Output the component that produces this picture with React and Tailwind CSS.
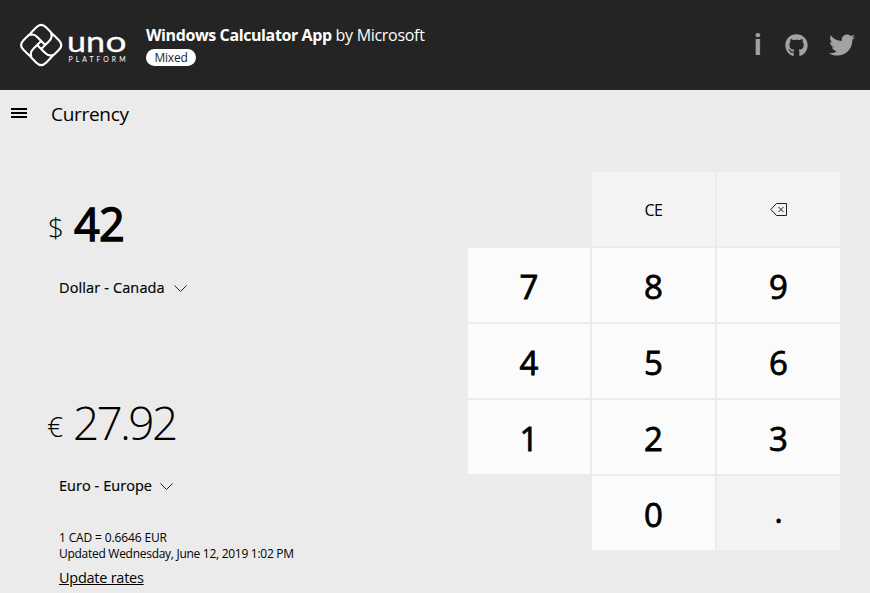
import { FaTwitter, FaGithub } from "react-icons/fa";

const keys = ["", "CE", "back", "7", "8", "9", "4", "5", "6", "1", "2", "3", "", "0", "."];

function Logo() {
  return (
    <svg className="h-[46px] w-[110px]" viewBox="0 0 110 46" fill="none">
      <g transform="translate(22.2 23) rotate(45) scale(.96)" stroke="#fff" strokeWidth="2.2" strokeLinejoin="round">
        {[0, 90, 180, 270].map((a) => (
          <path key={a} transform={`rotate(${a})`} d="M3 -3H-8.5Q-14.5 -3 -15.8 1.5M-15.8 1.5Q-16.6 -1 -16.6 -4V-9.5Q-16.6 -16.6 -9.5 -16.6H-4Q-1 -16.6 1.5 -15.8" />
        ))}
      </g>
      <g fill="#fff" stroke="#fff" fontFamily="Lato, sans-serif" fontSize="29" strokeWidth="0.3">
        <text y="30">
          <tspan x="48" textLength="19" lengthAdjust="spacingAndGlyphs">u</tspan>
          <tspan x="67" textLength="19" lengthAdjust="spacingAndGlyphs">n</tspan>
          <tspan x="86.5" textLength="21" lengthAdjust="spacingAndGlyphs">o</tspan>
        </text>
      </g>
      <text x="49.5" y="40" textLength="57" fill="#fff" fontFamily="Lato, sans-serif" fontWeight="400" fontSize="6.8">PLATFORM</text>
    </svg>
  );
}

function Chevron() {
  return (
    <svg className="h-[7px] w-[13px]" viewBox="0 0 13 7" fill="none" stroke="#222" strokeWidth="1">
      <path d="M.5 .5l6 6 6-6" />
    </svg>
  );
}

function Key({ label }) {
  if (!label) return <div />;
  const light = label === "CE" || label === "back" || label === ".";
  return (
    <button className={"flex items-center justify-center " + (light ? "bg-[#f3f3f3]" : "bg-[#fbfbfb]")}>
      {label === "back" ? (
        <svg className="mt-[2px] h-[14px] w-[18px]" viewBox="0 0 18 14" fill="none" stroke="#222">
          <path d="M6.5 .5h10v12h-10L.8 6.5zM8.5 4l5 5M13.5 4l-5 5" />
        </svg>
      ) : label === "CE" ? (
        <span className="pt-[2px] text-[16px] tracking-[-0.4px]">CE</span>
      ) : label === "." ? (
        <span className="pb-[5px] text-[33px] leading-none [-webkit-text-stroke:0.5px_black]">.</span>
      ) : (
        <span className="pt-[3px] text-[33px] leading-none [-webkit-text-stroke:0.8px_black]">{label}</span>
      )}
    </button>
  );
}

export default function App() {
  return (
    <div className="flex h-[593px] w-[870px] flex-col overflow-hidden bg-[#ebebeb] font-['Open_Sans',sans-serif] text-black">
      <header className="flex h-[90px] shrink-0 bg-[#242424] pr-[15px] pl-[19px] text-white">
        <div className="pt-[22px]"><Logo /></div>
        <div className="ml-[17px] flex flex-col items-start pt-[25px]">
          <div className="text-[16px] leading-[20px] tracking-[-0.3px] whitespace-nowrap">
            <b className="tracking-[-0.39px]">Windows Calculator App</b> by Microsoft
          </div>
          <span className="mt-[4px] flex h-[17px] w-[50px] items-center justify-center rounded-full bg-white text-[12px] tracking-[-0.2px] text-[#242424]">Mixed</span>
        </div>
        <div className="ml-auto flex items-center text-[#a2a2a2]">
          <span className="-mt-[3px] mr-[23px] text-[28px] leading-none font-bold">i</span>
          <FaGithub className="mr-[21px] size-[23px]" />
          <FaTwitter className="size-[26px]" />
        </div>
      </header>
      <main className="flex flex-1">
        <section className="w-[468px] shrink-0 whitespace-nowrap">
          <div className="flex h-[48px] items-center pl-[11px]">
            <div className="-mt-[2px] flex w-[16px] flex-col gap-[2px]">
              <i className="h-[2px] bg-black" /><i className="h-[2px] bg-black" /><i className="h-[2px] bg-black" />
            </div>
            <h1 className="ml-[24px] text-[19px] tracking-[-0.3px]">Currency</h1>
          </div>
          <div className="mt-[56px] flex h-[60px] items-baseline pl-[48px]">
            <span className="relative -top-[3px] w-[26px] text-[28px] font-light">$</span>
            <span className="text-[45px] leading-[60px] tracking-[-0.8px] [-webkit-text-stroke:1.4px_black]">42</span>
          </div>
          <div className="mt-[24px] flex h-[20px] items-center gap-[9px] pl-[59px] text-[14.5px] tracking-[0.13px] [-webkit-text-stroke:0.2px_black]">Dollar - Canada <Chevron /></div>
          <div className="mt-[94px] flex h-[60px] items-baseline pl-[48px]">
            <span className="relative -top-[3px] -left-px w-[26px] text-[28px] font-light">€</span>
            <span className="-ml-px text-[46px] leading-[60px] font-light tracking-[-2.7px]">27.92</span>
          </div>
          <div className="mt-[24px] flex h-[20px] items-center gap-[8px] pl-[59px] text-[14.5px] tracking-[0.05px] [-webkit-text-stroke:0.2px_black]">Euro - Europe <Chevron /></div>
          <div className="mt-[34px] pl-[59px] text-[12px] leading-[16px]">
            <p className="tracking-[-0.14px]">1 CAD = 0.6646 EUR</p>
            <p className="tracking-[-0.28px]">Updated Wednesday, June 12, 2019 1:02 PM</p>
          </div>
          <a className="mt-[6px] ml-[59px] block text-[14.5px] leading-[20px] tracking-[-0.25px] underline">Update rates</a>
        </section>
        <div className="mt-[82px] grid h-[378px] w-[372px] grid-cols-[122px_123px_123px] grid-rows-5 gap-[2px]">
          {keys.map((k, i) => <Key key={i} label={k} />)}
        </div>
      </main>
    </div>
  );
}
